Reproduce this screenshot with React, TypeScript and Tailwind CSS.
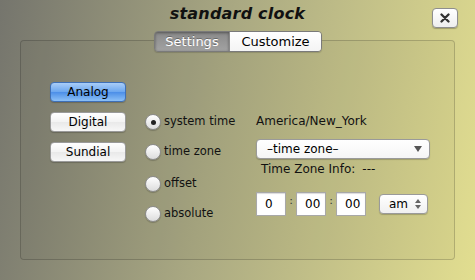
import React from 'react';

const font = { fontFamily: '"DejaVu Sans", "Liberation Sans", sans-serif' };

function Radio({ label, checked }: { label: string; checked?: boolean }) {
  return (
    <div className="flex items-center h-[16px] gap-[3px]">
      <span className="w-[16px] h-[16px] rounded-full border border-[#8d8d8d] bg-[linear-gradient(#ffffff,#dcdcdc)] shadow-[0_1px_1px_rgba(0,0,0,0.2)] flex items-center justify-center">
        {checked && <span className="w-[5px] h-[5px] rounded-full bg-[#222]" />}
      </span>
      <span className="text-[11.5px] text-[#111]">{label}</span>
    </div>
  );
}

function PushButton({ label, active }: { label: string; active?: boolean }) {
  return (
    <button
      className={`w-[76px] h-[20px] rounded-[4px] border text-[12px] leading-none text-black shadow-[0_1px_1px_rgba(0,0,0,0.2)] ${
        active
          ? 'border-[#3e6fb6] bg-[linear-gradient(#a9cdf7,#6aa6ef_50%,#4b8ee8_51%,#8cc0f6)]'
          : 'border-[#9a9a9a] bg-[linear-gradient(#ffffff,#f3f3f3_50%,#e9e9e9_51%,#f7f7f7)]'
      }`}
    >
      {label}
    </button>
  );
}

function TimeBox({ value }: { value: string }) {
  return (
    <div className="w-[30px] h-[24px] bg-white border border-[#a8a8a8] shadow-[inset_0_1px_1px_rgba(0,0,0,0.15)] flex items-center pl-[8px] text-[12px] text-black">
      {value}
    </div>
  );
}

export default function App() {
  return (
    <div
      className="w-[475px] h-[280px] relative overflow-hidden bg-[linear-gradient(100deg,#75756d,#a9a882_45%,#e2de90)]"
      style={font}
    >
      {/* Title */}
      <div className="h-[30px] flex items-center justify-center">
        <h1 className="text-[16px] font-bold italic text-[#111] tracking-[0.2px] mt-[-2px]">standard clock</h1>
      </div>

      {/* Close */}
      <button className="absolute left-[432px] top-[8px] w-[26px] h-[20px] rounded-[4px] border border-[#8e8e8e] bg-[linear-gradient(#ffffff,#eeeeee)] shadow-[0_1px_1px_rgba(0,0,0,0.25)] flex items-center justify-center">
        <svg width="10" height="10" viewBox="0 0 10 10">
          <path d="M1.5 1.5L8.5 8.5M8.5 1.5L1.5 8.5" stroke="#333" strokeWidth="2.3" strokeLinecap="round" />
        </svg>
      </button>

      {/* Panel */}
      <div className="mx-[20px] mt-[10px] h-[220px] relative rounded-[4px] border border-[rgba(0,0,0,0.18)] bg-[rgba(0,0,0,0.03)] pt-[41px] pl-[29px] flex">
        {/* Tabs */}
        <div className="absolute top-[-10px] left-[133px] flex h-[21px] rounded-[4px] border border-[#7a7a7a] overflow-hidden shadow-[0_1px_1px_rgba(0,0,0,0.15)]">
          <div className="w-[74px] flex items-center justify-center text-[13px] text-white bg-[linear-gradient(#8a8a8a,#a2a2a2)] shadow-[inset_0_1px_3px_rgba(0,0,0,0.4)] [text-shadow:0_-1px_0_rgba(0,0,0,0.3)]">
            Settings
          </div>
          <div className="w-[92px] flex items-center justify-center text-[13px] text-black bg-[linear-gradient(#ffffff,#f4f4f4)] border-l border-[#8a8a8a]">
            Customize
          </div>
        </div>

        {/* Mode buttons */}
        <div className="flex flex-col gap-[10px]">
          <PushButton label="Analog" active />
          <PushButton label="Digital" />
          <PushButton label="Sundial" />
        </div>

        {/* Radios */}
        <div className="ml-[19px] w-[111px] pt-[32px] flex flex-col">
          <Radio label="system time" checked />
          <div className="h-[14px]" />
          <Radio label="time zone" />
          <div className="h-[16px]" />
          <Radio label="offset" />
          <div className="h-[14px]" />
          <Radio label="absolute" />
        </div>

        {/* Right column */}
        <div className="pt-[31px] flex flex-col">
          <div className="h-[16px] flex items-center text-[12px] text-[#111]">America/New_York</div>
          <div className="mt-[10px] w-[174px] h-[20px] rounded-[4px] border border-[#9a9a9a] bg-[linear-gradient(#ffffff,#f5f5f5)] shadow-[0_1px_1px_rgba(0,0,0,0.2)] flex items-center justify-between pl-[10px] pr-[7px] text-[12px] text-black">
            <span>–time zone–</span>
            <svg width="8" height="6" viewBox="0 0 8 6">
              <path d="M0 0H8L4 6Z" fill="#555" />
            </svg>
          </div>
          <div className="mt-[2px] pl-[5px] h-[16px] flex items-center text-[12px] text-[#111] gap-[7px]">
            <span>Time Zone Info:</span>
            <span>---</span>
          </div>
          <div className="mt-[15px] flex items-center">
            <TimeBox value="0" />
            <span className="w-[10px] text-center text-[11px] text-[#333] mt-[-6px]">:</span>
            <TimeBox value="00" />
            <span className="w-[10px] text-center text-[11px] text-[#333] mt-[-6px]">:</span>
            <TimeBox value="00" />
            <div className="ml-[13px] w-[49px] h-[20px] rounded-[4px] border border-[#9a9a9a] bg-[linear-gradient(#ffffff,#f0f0f0)] shadow-[0_1px_1px_rgba(0,0,0,0.2)] flex items-center justify-between pl-[9px] pr-[6px] text-[12px] text-black">
              <span>am</span>
              <svg width="6" height="10" viewBox="0 0 6 10">
                <path d="M0 4L3 0L6 4Z M0 6L3 10L6 6Z" fill="#666" />
              </svg>
            </div>
          </div>
        </div>
      </div>
    </div>
  );
}
